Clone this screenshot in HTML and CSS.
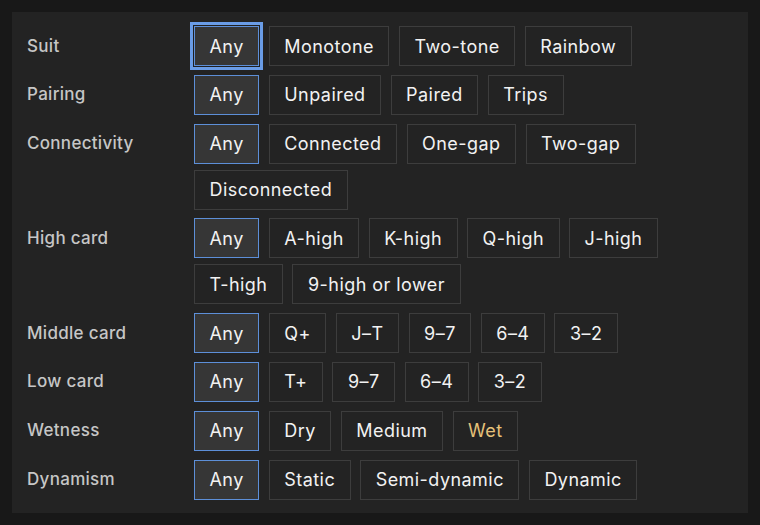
FILE: index.html
```html
<!DOCTYPE html>
<html>
<head>
<meta charset="utf-8">
<link rel="stylesheet" href="styles.css">
</head>
<body>
<div class="panel">
  <div class="group">
    <div class="label">Suit</div>
    <div class="opts">
      <button class="opt sel focus">Any</button>
      <button class="opt">Monotone</button>
      <button class="opt">Two-tone</button>
      <button class="opt">Rainbow</button>
    </div>
  </div>
  <div class="group">
    <div class="label">Pairing</div>
    <div class="opts">
      <button class="opt sel">Any</button>
      <button class="opt">Unpaired</button>
      <button class="opt">Paired</button>
      <button class="opt">Trips</button>
    </div>
  </div>
  <div class="group">
    <div class="label">Connectivity</div>
    <div class="opts">
      <button class="opt sel">Any</button>
      <button class="opt">Connected</button>
      <button class="opt">One-gap</button>
      <button class="opt">Two-gap</button>
      <button class="opt">Disconnected</button>
    </div>
  </div>
  <div class="group">
    <div class="label">High card</div>
    <div class="opts">
      <button class="opt sel">Any</button>
      <button class="opt">A-high</button>
      <button class="opt">K-high</button>
      <button class="opt">Q-high</button>
      <button class="opt">J-high</button>
      <button class="opt">T-high</button>
      <button class="opt">9-high or lower</button>
    </div>
  </div>
  <div class="group">
    <div class="label">Middle card</div>
    <div class="opts">
      <button class="opt sel">Any</button>
      <button class="opt">Q+</button>
      <button class="opt">J–T</button>
      <button class="opt">9–7</button>
      <button class="opt">6–4</button>
      <button class="opt">3–2</button>
    </div>
  </div>
  <div class="group">
    <div class="label">Low card</div>
    <div class="opts">
      <button class="opt sel">Any</button>
      <button class="opt">T+</button>
      <button class="opt">9–7</button>
      <button class="opt">6–4</button>
      <button class="opt">3–2</button>
    </div>
  </div>
  <div class="group">
    <div class="label">Wetness</div>
    <div class="opts">
      <button class="opt sel">Any</button>
      <button class="opt">Dry</button>
      <button class="opt">Medium</button>
      <button class="opt wet">Wet</button>
    </div>
  </div>
  <div class="group">
    <div class="label">Dynamism</div>
    <div class="opts">
      <button class="opt sel">Any</button>
      <button class="opt">Static</button>
      <button class="opt">Semi-dynamic</button>
      <button class="opt">Dynamic</button>
    </div>
  </div>
</div>
</body>
</html>
```

FILE: styles.css
```css
html, body {
  margin: 0;
  padding: 0;
  background: #181818;
}
body {
  padding: 12px;
  font-family: Inter, "Noto Sans", sans-serif;
}
.panel {
  width: 736px;
  height: 501px;
  box-sizing: border-box;
  background: #232323;
  padding: 14px 15px 14px 15px;
  display: flex;
  flex-direction: column;
  gap: 8.8px;
}
.group {
  display: grid;
  grid-template-columns: 167px 1fr;
  align-items: start;
}
.label {
  color: #c6c6c6;
  font-size: 17px;
  font-weight: 500;
  letter-spacing: 0.3px;
  line-height: 20px;
  padding-top: 9.5px;
}
.opts {
  display: flex;
  flex-wrap: wrap;
  column-gap: 9.5px;
  row-gap: 6px;
}
.opt {
  height: 40px;
  box-sizing: border-box;
  padding: 0 14.5px;
  background: #232323;
  border: 1px solid #3d3d3d;
  color: #f2f2f2;
  font-family: inherit;
  font-size: 18px;
  font-weight: 400;
  letter-spacing: 0.45px;
  border-radius: 0;
  cursor: pointer;
}
.opt.sel {
  background: #363636;
  border-color: #5d8fd8;
}
.opt.focus {
  box-shadow: 0 0 0 1px #202020, 0 0 0 4px #6a9ce6;
}
.opt.wet {
  color: #e6c27a;
}
```
